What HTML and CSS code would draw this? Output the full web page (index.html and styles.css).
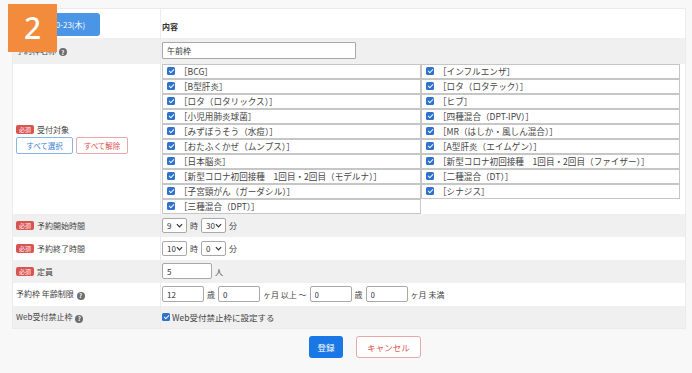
FILE: index.html
```html
<!DOCTYPE html>
<html lang="ja">
  <head>
    <meta charset="UTF-8" />
    <meta name="viewport" content="width=device-width, initial-scale=1.0" />
    <title>予約枠編集</title>
    <link rel="stylesheet" href="styles.css">
  </head>
  <body>
    <div class="step-badge">2</div>

    <table class="form">
      <tr class="row-head">
        <th class="lbl"><button class="date-btn">2022-10-23(木)</button></th>
        <th class="val head-title">内容</th>
      </tr>
      <tr class="row-name alt">
        <th class="lbl">予約枠名称 <span class="help">?</span></th>
        <td class="val"><input type="text" class="in-name" value="午前枠" /></td>
      </tr>
      <tr class="row-target">
        <th class="lbl">
          <div class="lbl-line"><span class="req">必須</span>受付対象</div>
          <div class="sel-btns">
            <button class="btn-all">すべて選択</button>
            <button class="btn-none">すべて解除</button>
          </div>
        </th>
        <td class="val list-cell">
          <div class="vlist">
            <div class="vcol">
              <div class="item"><span class="cb"></span>［BCG］</div>
              <div class="item"><span class="cb"></span>［B型肝炎］</div>
              <div class="item"><span class="cb"></span>［ロタ（ロタリックス）］</div>
              <div class="item"><span class="cb"></span>［小児用肺炎球菌］</div>
              <div class="item"><span class="cb"></span>［みずぼうそう（水痘）］</div>
              <div class="item"><span class="cb"></span>［おたふくかぜ（ムンプス）］</div>
              <div class="item"><span class="cb"></span>［日本脳炎］</div>
              <div class="item"><span class="cb"></span>［新型コロナ初回接種　1回目・2回目（モデルナ）］</div>
              <div class="item"><span class="cb"></span>［子宮頸がん（ガーダシル）］</div>
              <div class="item"><span class="cb"></span>［三種混合（DPT）］</div>
            </div>
            <div class="vcol">
              <div class="item"><span class="cb"></span>［インフルエンザ］</div>
              <div class="item"><span class="cb"></span>［ロタ（ロタテック）］</div>
              <div class="item"><span class="cb"></span>［ヒブ］</div>
              <div class="item"><span class="cb"></span>［四種混合（DPT-IPV）］</div>
              <div class="item"><span class="cb"></span>［MR（はしか・風しん混合）］</div>
              <div class="item"><span class="cb"></span>［A型肝炎（エイムゲン）］</div>
              <div class="item"><span class="cb"></span>［新型コロナ初回接種　1回目・2回目（ファイザー）］</div>
              <div class="item"><span class="cb"></span>［二種混合（DT）］</div>
              <div class="item"><span class="cb"></span>［シナジス］</div>
            </div>
          </div>
        </td>
      </tr>
      <tr class="row alt">
        <th class="lbl"><span class="req">必須</span>予約開始時間</th>
        <td class="val">
          <div class="inline">
            <span class="sel">9<svg viewBox="0 0 8 5" width="7" height="5"><path d="M1 1l3 3 3-3" fill="none" stroke="#333" stroke-width="1.4"/></svg></span>時
            <span class="sel">30<svg viewBox="0 0 8 5" width="7" height="5"><path d="M1 1l3 3 3-3" fill="none" stroke="#333" stroke-width="1.4"/></svg></span>分
          </div>
        </td>
      </tr>
      <tr class="row">
        <th class="lbl"><span class="req">必須</span>予約終了時間</th>
        <td class="val">
          <div class="inline">
            <span class="sel">10<svg viewBox="0 0 8 5" width="7" height="5"><path d="M1 1l3 3 3-3" fill="none" stroke="#333" stroke-width="1.4"/></svg></span>時
            <span class="sel">0<svg viewBox="0 0 8 5" width="7" height="5"><path d="M1 1l3 3 3-3" fill="none" stroke="#333" stroke-width="1.4"/></svg></span>分
          </div>
        </td>
      </tr>
      <tr class="row alt">
        <th class="lbl"><span class="req">必須</span>定員</th>
        <td class="val">
          <div class="inline"><input type="text" class="in-cap" value="5" />人</div>
        </td>
      </tr>
      <tr class="row">
        <th class="lbl">予約枠 年齢制限 <span class="help">?</span></th>
        <td class="val">
          <div class="inline">
            <input type="text" class="in-age" value="12" />歳
            <input type="text" class="in-age" value="0" />ヶ月 以上 ～
            <input type="text" class="in-age" value="0" />歳
            <input type="text" class="in-age" value="0" />ヶ月 未満
          </div>
        </td>
      </tr>
      <tr class="row alt">
        <th class="lbl">Web受付禁止枠 <span class="help">?</span></th>
        <td class="val">
          <div class="inline web"><span class="cb"></span>Web受付禁止枠に設定する</div>
        </td>
      </tr>
    </table>

    <div class="actions">
      <button class="btn-save">登録</button>
      <button class="btn-cancel">キャンセル</button>
    </div>
  </body>
</html>
```

FILE: styles.css
```css
* {
  margin: 0;
  padding: 0;
  box-sizing: border-box;
}

body {
  font-family: "Noto Sans CJK JP", "Noto Sans", sans-serif;
  font-size: 9px;
  color: #333;
  background: #f8f8f8;
  padding: 8px 6px 0 12px;
}

button,
input {
  font-family: inherit;
}

/* step number over the corner */
.step-badge {
  position: absolute;
  left: 8px;
  top: 4px;
  width: 49px;
  height: 48px;
  background: #f28b3c;
  color: white;
  font-family: "Noto Sans", sans-serif;
  font-size: 30px;
  font-weight: 500;
  line-height: 48px;
  text-align: center;
}

.form {
  width: 674px;
  border-collapse: collapse;
  background: white;
  border: 1px solid #ebebeb;
}

.form th,
.form td {
  text-align: left;
  vertical-align: middle;
  font-weight: normal;
}

.form .lbl {
  width: 150px;
  padding-left: 3px;
  font-size: 8px;
  color: #444;
  border-right: 1px solid #ececec;
}

.form .val {
  padding-left: 1px;
  padding-right: 5px;
}

.alt {
  background: #f0f0f0;
}

.row-head {
  height: 29px;
}

.row-head th {
  vertical-align: bottom;
  padding-bottom: 2px;
}

.date-btn {
  width: 84px;
  height: 23px;
  border: none;
  border-radius: 3px;
  background: #4b95e6;
  color: white;
  font-size: 8px;
}

.head-title {
  font-weight: bold !important;
  font-size: 8px;
  padding-bottom: 6px !important;
}

.row-name {
  height: 26px;
}

.in-name {
  width: 194px;
  height: 17px;
  border: 1px solid #a8a8a8;
  border-radius: 1px;
  padding: 0 4px;
  font-size: 8px;
  color: #333;
  background: white;
}

.help {
  display: inline-flex;
  justify-content: center;
  align-items: center;
  width: 8px;
  height: 8px;
  border-radius: 50%;
  background: #6d6d6d;
  color: white;
  font-size: 6px;
  font-weight: bold;
  vertical-align: -1px;
  margin-left: 1px;
}

.req {
  display: inline-block;
  background: #d9534f;
  color: white;
  font-size: 6px;
  line-height: 9px;
  padding: 0 3px;
  border-radius: 2px;
  margin-right: 3px;
  vertical-align: 1px;
}

.lbl-line {
  margin-top: 0;
}

.sel-btns {
  display: flex;
  gap: 3px;
  margin-top: 2px;
}

.sel-btns button {
  height: 17px;
  background: white;
  border-radius: 2px;
  font-size: 7.5px;
}

.btn-all {
  width: 57px;
  border: 1px solid #8ab4e2;
  color: #3a7fcf;
}

.btn-none {
  width: 52px;
  border: 1px solid #e7a8a8;
  color: #d9534f;
}

/* vaccine list */
.list-cell {
  padding-top: 0;
  padding-bottom: 0;
}

.vlist {
  display: grid;
  grid-template-columns: 259px 259px;
  align-items: start;
}

.item {
  display: flex;
  align-items: center;
  gap: 4px;
  height: 15px;
  padding-left: 4px;
  border: 1px solid #c6c6c6;
  font-size: 8.6px;
  color: #444;
  white-space: nowrap;
  overflow: hidden;
}

.cb {
  position: relative;
  flex: none;
  display: inline-block;
  width: 8px;
  height: 8px;
  border-radius: 1.5px;
  background: #2f72cc;
}

.cb::after {
  content: "";
  position: absolute;
  left: 2.6px;
  top: 0.8px;
  width: 2px;
  height: 4.2px;
  border: solid white;
  border-width: 0 1.2px 1.2px 0;
  transform: rotate(45deg);
}

.row {
  height: 23px;
}

.inline {
  display: flex;
  align-items: center;
  gap: 3px;
  font-size: 8px;
  color: #444;
}

.sel {
  display: inline-flex;
  align-items: center;
  justify-content: space-between;
  width: 25px;
  height: 15px;
  padding: 0 3px 0 4px;
  border: 1px solid #a8a8a8;
  border-radius: 2px;
  background: white;
  font-size: 8px;
  color: #333;
}

.in-cap,
.in-age {
  width: 50px;
  height: 16px;
  border: 1px solid #a8a8a8;
  border-radius: 2px;
  padding: 0 4px;
  font-size: 8px;
  color: #333;
  background: white;
}

.in-age {
  width: 42px;
}

.web {
  gap: 2px;
  font-size: 8.5px;
}

.actions {
  display: flex;
  justify-content: center;
  gap: 13px;
  padding: 7px 0 0 32px;
}

.actions button {
  height: 22px;
  border-radius: 3px;
  font-size: 8.5px;
}

.btn-save {
  width: 34px;
  border: none;
  background: #1a78e6;
  color: white;
}

.btn-cancel {
  width: 65px;
  border: 1px solid #e5a9a9;
  background: white;
  color: #d9534f;
}
```
